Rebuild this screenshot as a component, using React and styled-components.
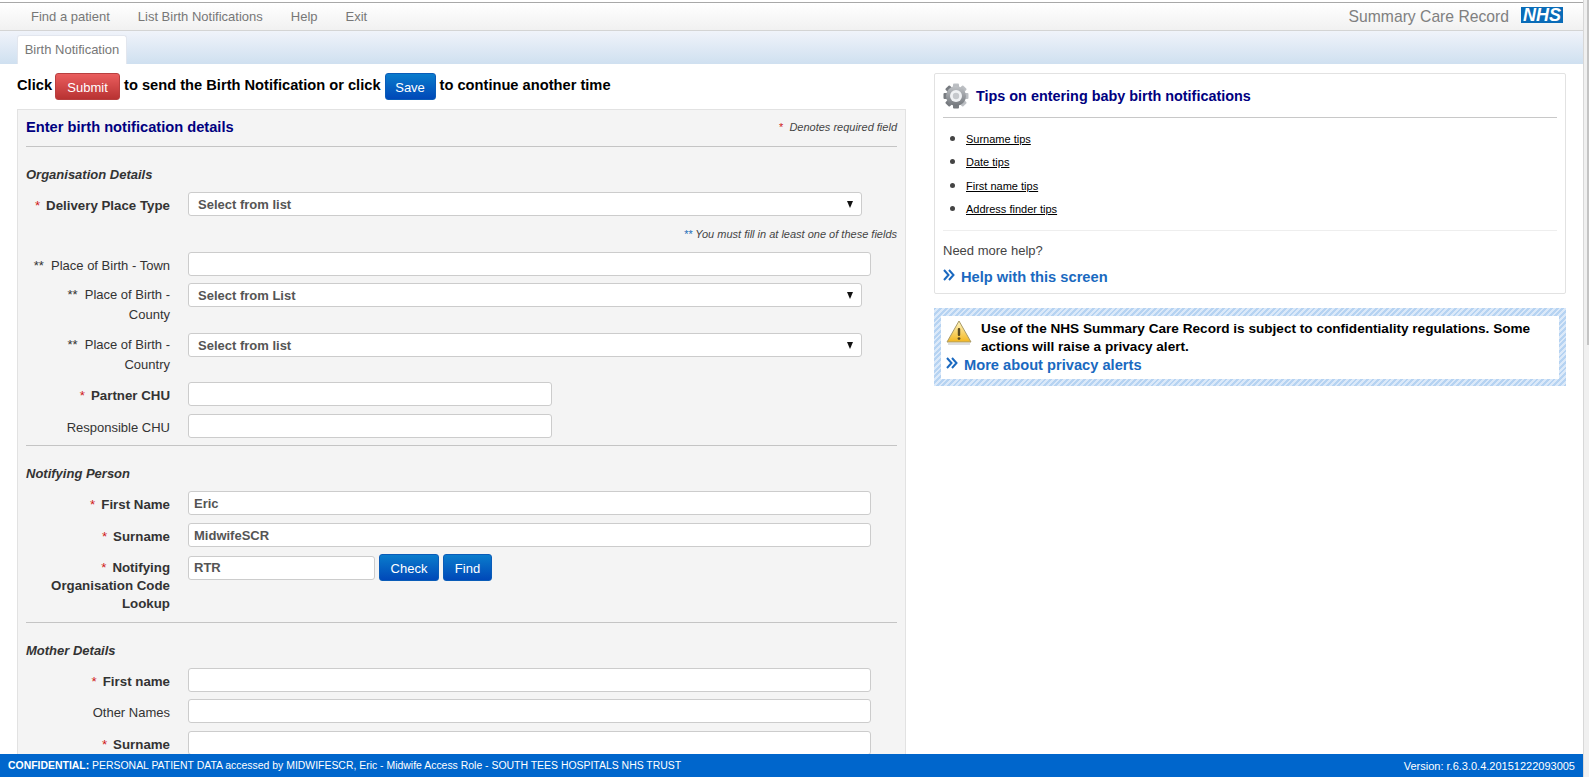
import React from "react";
import styled, { createGlobalStyle } from "styled-components";

const GlobalStyle = createGlobalStyle`
  html, body {
    margin: 0;
    height: 100%;
    overflow: hidden;
    background: #fff;
  }
  body {
    font-family: "Liberation Sans", Arial, sans-serif;
    color: #333;
  }
`;

const Frame = styled.div`
  display: flex;
  height: 777px;
`;

const Page = styled.div`
  flex: 1;
  min-width: 0;
  display: flex;
  flex-direction: column;
`;

const ScrollTrack = styled.div`
  width: 5px;
  background: #f0f0f0;
  border-left: 1px solid #d8d8d8;
`;

const ScrollThumb = styled.div`
  width: 2px;
  height: 345px;
  margin-left: 3px;
  background: #c4c4c4;
`;

const TopBar = styled.div`
  display: flex;
  align-items: center;
  justify-content: space-between;
  height: 27px;
  margin-top: 2px;
  padding: 0 20px 0 17px;
  border-top: 1px solid #a8a8a8;
  border-bottom: 1px solid #d4d4d4;
  background: linear-gradient(#fff, #f1f1f1);
`;

const NavList = styled.nav`
  display: flex;
`;

const NavItem = styled.a`
  padding: 0 14px;
  font-size: 13px;
  color: #777;
`;

const Brand = styled.div`
  display: flex;
  align-items: center;
  gap: 12px;
`;

const BrandName = styled.span`
  font-size: 15.7px;
  color: #808080;
`;

const NhsLogo = styled.span`
  width: 42px;
  height: 16px;
  margin-bottom: 3px;
  background: #0a6cb8;
  color: #fff;
  font-size: 18px;
  font-weight: bold;
  font-style: italic;
  line-height: 16px;
  text-align: center;
`;

const TabStrip = styled.div`
  display: flex;
  align-items: flex-end;
  height: 33px;
  padding-left: 17px;
  background: linear-gradient(#f0f3fa, #cfe0f0);
`;

const Tab = styled.div`
  width: 110px;
  height: 29px;
  border: 1px solid #e2e6ee;
  border-bottom: 0;
  border-radius: 3px 3px 0 0;
  background: #fff;
  box-sizing: border-box;
  font-size: 13px;
  line-height: 27px;
  text-align: center;
  color: #777;
`;

const Content = styled.main`
  flex: 1;
  min-height: 0;
  overflow: hidden;
  display: flex;
  padding: 9px 17px 0;
  gap: 28px;
`;

const LeftColumn = styled.div`
  width: 889px;
  flex-shrink: 0;
`;

const RightColumn = styled.aside`
  width: 632px;
  flex-shrink: 0;
  display: flex;
  flex-direction: column;
  gap: 14px;
`;

const ActionLine = styled.div`
  display: flex;
  align-items: center;
  gap: 4px;
  height: 27px;
  margin-bottom: 9px;
  font-size: 14.67px;
  font-weight: bold;
  color: #000;
`;

const Phrase = styled.span`
  margin-bottom: 4px;
  margin-right: ${(p) => p.$pull || 0}px;
`;

const ActionButton = styled.button`
  height: 27px;
  width: ${(p) => p.$width}px;
  padding: 2px 0 0;
  border: 1px solid ${(p) => (p.$tone === "red" ? "#b84040" : "#0a5cb8")};
  border-radius: 3px;
  background: ${(p) =>
    p.$tone === "red"
      ? "linear-gradient(#ea5e5e, #b83232)"
      : "linear-gradient(#0a7ccc, #0048b8)"};
  color: #fff;
  font-family: inherit;
  font-size: 13px;
`;

const FormPanel = styled.section`
  box-sizing: border-box;
  padding: 0 8px 40px;
  border: 1px solid #e2e2e2;
  background: #f4f4f4;
`;

const PanelHead = styled.div`
  box-sizing: border-box;
  display: flex;
  align-items: center;
  justify-content: space-between;
  height: 37px;
  padding-bottom: 3px;
  border-bottom: 1px solid #c4c4c4;
`;

const PanelTitle = styled.h2`
  margin: 0;
  font-size: 14.67px;
  color: #000080;
`;

const Legend = styled.span`
  font-size: 11px;
  font-style: italic;
  color: #444;
`;

const Star = styled.span`
  color: #d01818;
  margin-right: 6px;
  font-weight: normal;
  font-style: normal;
`;

const SectionTitle = styled.h3`
  margin: 0;
  padding: 21px 0 10px;
  font-size: 13px;
  line-height: 14px;
  font-style: italic;
  font-weight: bold;
  color: #333;
`;

const Row = styled.div`
  display: flex;
  gap: 18px;
  min-height: ${(p) => p.$height || 24}px;
  margin-bottom: ${(p) => p.$after ?? 8}px;
`;

const Label = styled.label`
  width: 144px;
  flex-shrink: 0;
  padding-top: ${(p) => p.$top ?? 5}px;
  font-size: ${(p) => (p.$strong ? 13.3 : 13)}px;
  line-height: ${(p) => p.$line || 18}px;
  font-weight: ${(p) => (p.$strong ? "bold" : "normal")};
  text-align: right;
  color: #333;
`;

const Field = styled.input`
  box-sizing: border-box;
  width: ${(p) => p.$width}px;
  height: 24px;
  padding: 0 5px;
  border: 1px solid #ccc;
  border-radius: 3px;
  background: #fff;
  outline: none;
  font-family: inherit;
  font-size: 13px;
  font-weight: bold;
  color: #555;
`;

const SelectBox = styled.div`
  box-sizing: border-box;
  display: flex;
  align-items: center;
  justify-content: space-between;
  width: 674px;
  height: 24px;
  padding: 0 8px 0 9px;
  border: 1px solid #ccc;
  border-radius: 3px;
  background: #fff;
  font-size: 13px;
  font-weight: bold;
  color: #555;
`;

const Caret = styled.span`
  width: 0;
  height: 0;
  border-left: 3.5px solid transparent;
  border-right: 3.5px solid transparent;
  border-top: 7px solid #111;
`;

const FieldGroup = styled.div`
  display: flex;
  align-items: center;
  gap: 4px;
  height: 27px;
`;

const NoteLine = styled.div`
  margin: 11px 0;
  font-size: 11px;
  line-height: 14px;
  font-style: italic;
  text-align: right;
  color: #444;
`;

const NoteMark = styled.span`
  color: #1c6cb8;
`;

const Rule = styled.hr`
  margin: 0;
  border: 0;
  border-top: 1px solid #c4c4c4;
`;

const TipsCard = styled.section`
  box-sizing: border-box;
  height: 221px;
  padding: 0 8px;
  border: 1px solid #e2e2e2;
  border-radius: 2px;
`;

const TipsHead = styled.div`
  display: flex;
  align-items: center;
  gap: 7px;
  height: 43px;
  border-bottom: 1px solid #c8c8c8;
`;

const TipsTitle = styled.h2`
  margin: 0;
  font-size: 14.4px;
  color: #000080;
`;

const TipList = styled.ul`
  margin: 0;
  padding: 8px 0 11px 23px;
  border-bottom: 1px solid #eee;
  font-size: 11px;
  color: #333;
`;

const TipItem = styled.li`
  height: 23.3px;
  line-height: 23px;

  &::marker {
    font-size: 15px;
    color: #444;
  }
`;

const TipLink = styled.a`
  color: #000;
  text-decoration: underline;
`;

const NeedHelp = styled.p`
  margin: 12px 0 10px;
  font-size: 13px;
  line-height: 15px;
  color: #444;
`;

const MoreLink = styled.a`
  display: flex;
  align-items: center;
  gap: 6px;
  font-size: 14.67px;
  line-height: 18px;
  font-weight: bold;
  color: #1a69c0;
`;

const AlertBox = styled.section`
  padding: 8px 7px 7px;
  background: repeating-linear-gradient(135deg, #b6d3f2 0 2px, #dbe9f9 2px 4px);
`;

const AlertInner = styled.div`
  box-sizing: border-box;
  height: 63px;
  padding: 4px 5px 0;
  background: #fff;
`;

const AlertTop = styled.div`
  display: flex;
  gap: 9px;
`;

const AlertText = styled.p`
  margin: 0;
  font-size: 13.6px;
  line-height: 18px;
  font-weight: bold;
  color: #000;
`;

const Footer = styled.footer`
  display: flex;
  align-items: center;
  justify-content: space-between;
  flex-shrink: 0;
  height: 23px;
  padding: 0 8px;
  background: #0066cc;
  color: #fff;
`;

const FooterNotice = styled.span`
  font-size: 10.45px;
`;

const FooterVersion = styled.span`
  font-size: 11px;
`;

const Gear = () => (
  <svg width="26" height="26" viewBox="0 0 26 26">
    <defs>
      <linearGradient id="gearFill" x1="0" y1="0" x2="0" y2="1">
        <stop offset="0" stopColor="#c0c3c7" />
        <stop offset="1" stopColor="#73777c" />
      </linearGradient>
    </defs>
    {[0, 45, 90, 135].map((a) => (
      <rect key={a} x="10" y="0.5" width="6" height="25" rx="1" fill="url(#gearFill)" transform={`rotate(${a} 13 13)`} />
    ))}
    <circle cx="13" cy="13" r="10" fill="url(#gearFill)" />
    <circle cx="13" cy="13" r="6" fill="#f0f2f4" />
    <circle cx="13" cy="13" r="3.2" fill="#c6c9cd" />
  </svg>
);

const Warning = () => (
  <svg width="26" height="25" viewBox="0 0 26 25" style={{ flexShrink: 0 }}>
    <defs>
      <linearGradient id="warnFill" x1="0" y1="0" x2="0" y2="1">
        <stop offset="0" stopColor="#fff6c4" />
        <stop offset="1" stopColor="#f3b61f" />
      </linearGradient>
    </defs>
    <path d="M13 1 L25 22 L1 22 Z" fill="url(#warnFill)" stroke="#a89a68" strokeLinejoin="round" />
    <rect x="11.8" y="8" width="2.4" height="8" rx="1" fill="#5a4a20" />
    <circle cx="13" cy="18.6" r="1.4" fill="#5a4a20" />
    <rect x="2" y="23" width="22" height="2" fill="#ddd" />
  </svg>
);

const Chevrons = () => (
  <svg width="12" height="12" viewBox="0 0 12 12" style={{ flexShrink: 0, marginTop: -4 }}>
    <path d="M1 1 L5.5 6 L1 11 M6 1 L10.5 6 L6 11" fill="none" stroke="#1a69c0" strokeWidth="2" />
  </svg>
);

const req = (text) => (
  <>
    <Star>*</Star>
    {text}
  </>
);

const tips = ["Surname tips", "Date tips", "First name tips", "Address finder tips"];

export default function App() {
  return (
    <>
      <GlobalStyle />
      <Frame>
        <Page>
          <TopBar>
            <NavList>
              <NavItem>Find a patient</NavItem>
              <NavItem>List Birth Notifications</NavItem>
              <NavItem>Help</NavItem>
              <NavItem>Exit</NavItem>
            </NavList>
            <Brand>
              <BrandName>Summary Care Record</BrandName>
              <NhsLogo>NHS</NhsLogo>
            </Brand>
          </TopBar>
          <TabStrip>
            <Tab>Birth Notification</Tab>
          </TabStrip>
          <Content>
            <LeftColumn>
              <ActionLine>
                <Phrase $pull={-1}>Click</Phrase>
                <ActionButton $tone="red" $width={65}>Submit</ActionButton>
                <Phrase>to send the Birth Notification or click</Phrase>
                <ActionButton $width={51}>Save</ActionButton>
                <Phrase>to continue another time</Phrase>
              </ActionLine>
              <FormPanel>
                <PanelHead>
                  <PanelTitle>Enter birth notification details</PanelTitle>
                  <Legend><Star>*</Star>Denotes required field</Legend>
                </PanelHead>
                <SectionTitle>Organisation Details</SectionTitle>
                <Row $after={0}>
                  <Label $strong>{req("Delivery Place Type")}</Label>
                  <SelectBox>Select from list<Caret /></SelectBox>
                </Row>
                <NoteLine><NoteMark>**</NoteMark> You must fill in at least one of these fields</NoteLine>
                <Row $after={7}>
                  <Label>**&nbsp; Place of Birth - Town</Label>
                  <Field $width={683} />
                </Row>
                <Row $height={42}>
                  <Label $line={20} $top={2}>**&nbsp; Place of Birth - County</Label>
                  <SelectBox>Select from List<Caret /></SelectBox>
                </Row>
                <Row $height={42} $after={7}>
                  <Label $line={20} $top={2}>**&nbsp; Place of Birth - Country</Label>
                  <SelectBox>Select from list<Caret /></SelectBox>
                </Row>
                <Row>
                  <Label $strong>{req("Partner CHU")}</Label>
                  <Field $width={364} />
                </Row>
                <Row $after={7}>
                  <Label>Responsible CHU</Label>
                  <Field $width={364} />
                </Row>
                <Rule />
                <SectionTitle>Notifying Person</SectionTitle>
                <Row>
                  <Label $strong>{req("First Name")}</Label>
                  <Field $width={683} defaultValue="Eric" />
                </Row>
                <Row $after={7}>
                  <Label $strong>{req("Surname")}</Label>
                  <Field $width={683} defaultValue="MidwifeSCR" />
                </Row>
                <Row $height={60}>
                  <Label $strong>{req("Notifying Organisation Code Lookup")}</Label>
                  <FieldGroup>
                    <Field $width={187} defaultValue="RTR" />
                    <ActionButton $width={60}>Check</ActionButton>
                    <ActionButton $width={49}>Find</ActionButton>
                  </FieldGroup>
                </Row>
                <Rule />
                <SectionTitle>Mother Details</SectionTitle>
                <Row $after={7}>
                  <Label $strong>{req("First name")}</Label>
                  <Field $width={683} />
                </Row>
                <Row $after={8}>
                  <Label>Other Names</Label>
                  <Field $width={683} />
                </Row>
                <Row>
                  <Label $strong>{req("Surname")}</Label>
                  <Field $width={683} />
                </Row>
              </FormPanel>
            </LeftColumn>
            <RightColumn>
              <TipsCard>
                <TipsHead>
                  <Gear />
                  <TipsTitle>Tips on entering baby birth notifications</TipsTitle>
                </TipsHead>
                <TipList>
                  {tips.map((t) => (
                    <TipItem key={t}><TipLink>{t}</TipLink></TipItem>
                  ))}
                </TipList>
                <NeedHelp>Need more help?</NeedHelp>
                <MoreLink><Chevrons />Help with this screen</MoreLink>
              </TipsCard>
              <AlertBox>
                <AlertInner>
                  <AlertTop>
                    <Warning />
                    <AlertText>
                      Use of the NHS Summary Care Record is subject to confidentiality regulations. Some actions will raise a privacy alert.
                    </AlertText>
                  </AlertTop>
                  <MoreLink><Chevrons />More about privacy alerts</MoreLink>
                </AlertInner>
              </AlertBox>
            </RightColumn>
          </Content>
          <Footer>
            <FooterNotice><b>CONFIDENTIAL:</b> PERSONAL PATIENT DATA accessed by MIDWIFESCR, Eric - Midwife Access Role - SOUTH TEES HOSPITALS NHS TRUST</FooterNotice>
            <FooterVersion>Version: r.6.3.0.4.20151222093005</FooterVersion>
          </Footer>
        </Page>
        <ScrollTrack>
          <ScrollThumb />
        </ScrollTrack>
      </Frame>
    </>
  );
}
